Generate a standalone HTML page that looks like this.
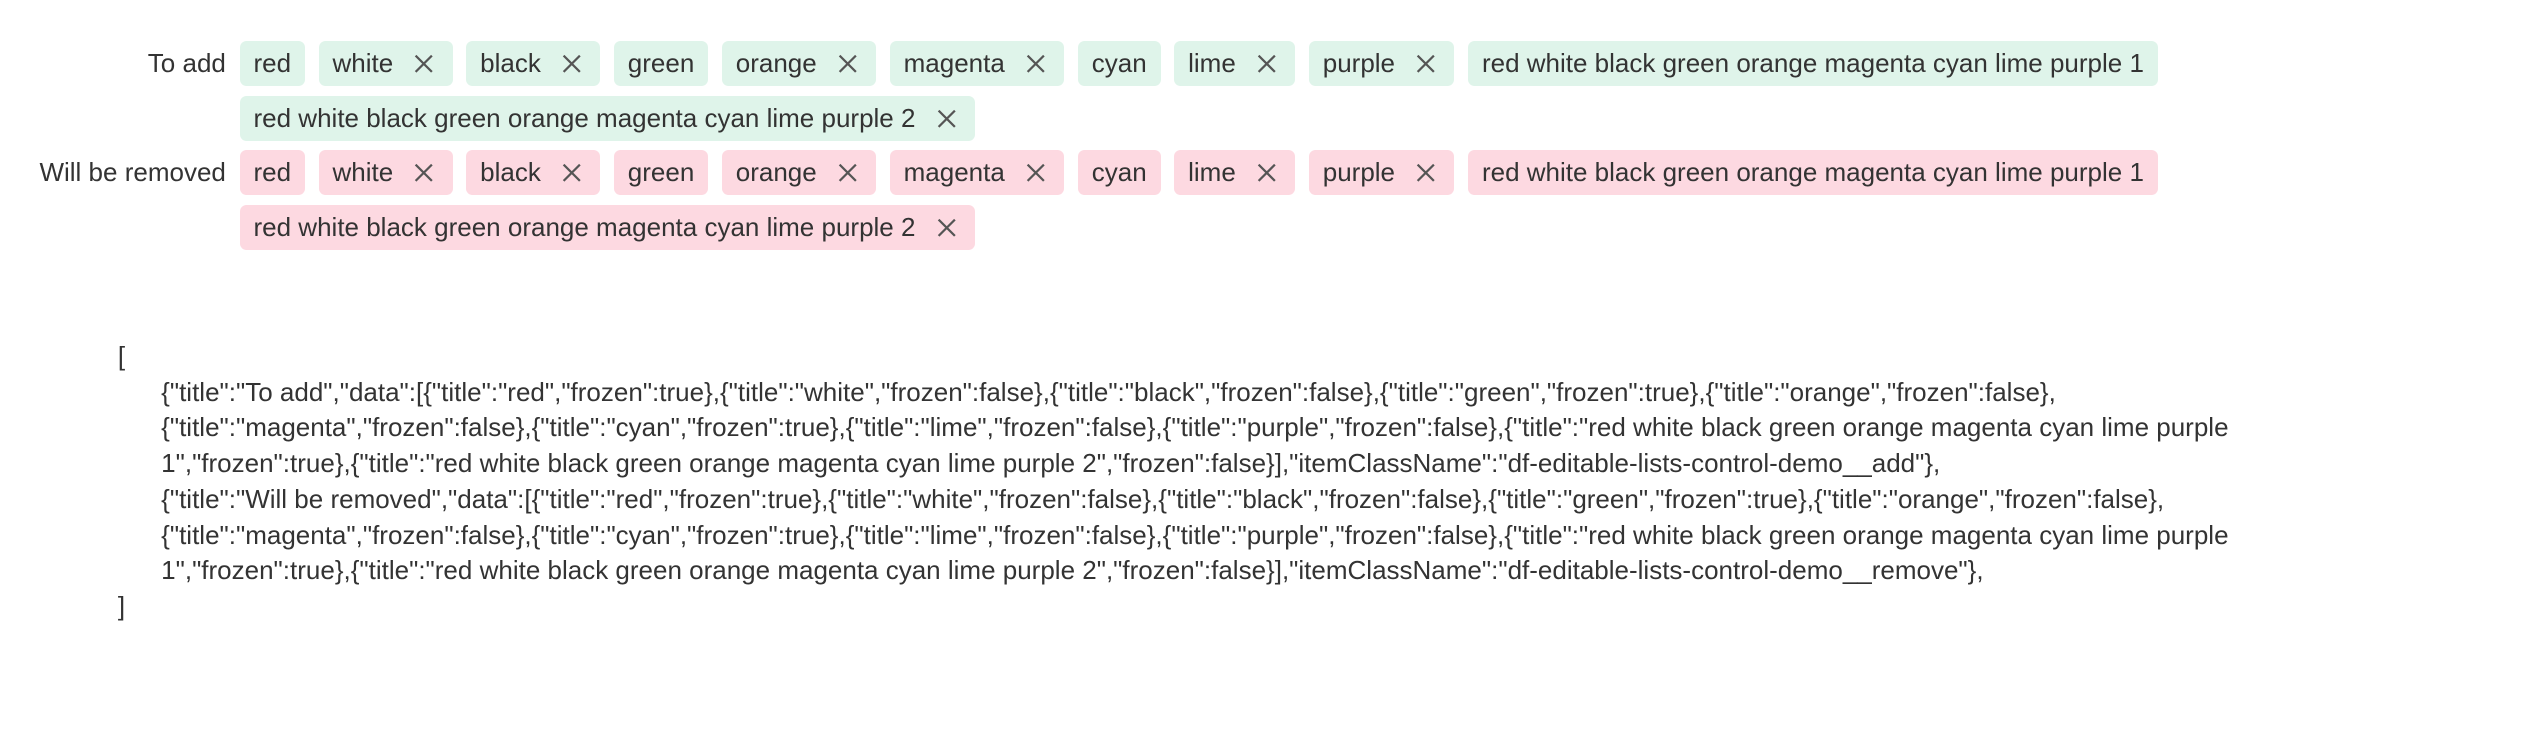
<!DOCTYPE html>
<html><head><meta charset="utf-8"><style>
html,body{margin:0;padding:0;background:#fff;width:2528px;height:748px;overflow:hidden}
#w{zoom:1.625;font-family:"Liberation Sans",Arial,sans-serif;font-size:16px;color:#333;width:1556px;position:relative}
.row{position:absolute;left:0;display:flex}
.lab{text-align:right;padding-right:8.5px;line-height:28px;box-sizing:border-box;width:147.5px}
.chips{width:1200px}
.c{display:inline-flex;align-items:center;height:28px;padding:0 8.5px;border-radius:4px;margin:0 8.5px 6px 0;vertical-align:top;white-space:nowrap}
.a .c{background:#dff4ea}
.r .c{background:#fdd9e1}
.x{width:12px;height:12px;margin-left:13px;margin-right:3px}
pre{position:absolute;left:72.5px;top:208.5px;margin:0;font-family:inherit;line-height:22px;white-space:pre}
</style></head><body><div id="w">
<div class="row a" style="top:25px"><div class="lab">To add</div><div class="chips">
<span class="c">red</span><span class="c">white<svg class="x" viewBox="0 0 12 12"><path d="M1 1L11 11M11 1L1 11" stroke="#555" stroke-width="1.4"/></svg></span><span class="c">black<svg class="x" viewBox="0 0 12 12"><path d="M1 1L11 11M11 1L1 11" stroke="#555" stroke-width="1.4"/></svg></span><span class="c">green</span><span class="c">orange<svg class="x" viewBox="0 0 12 12"><path d="M1 1L11 11M11 1L1 11" stroke="#555" stroke-width="1.4"/></svg></span><span class="c">magenta<svg class="x" viewBox="0 0 12 12"><path d="M1 1L11 11M11 1L1 11" stroke="#555" stroke-width="1.4"/></svg></span><span class="c">cyan</span><span class="c">lime<svg class="x" viewBox="0 0 12 12"><path d="M1 1L11 11M11 1L1 11" stroke="#555" stroke-width="1.4"/></svg></span><span class="c">purple<svg class="x" viewBox="0 0 12 12"><path d="M1 1L11 11M11 1L1 11" stroke="#555" stroke-width="1.4"/></svg></span><span class="c">red white black green orange magenta cyan lime purple 1</span><br><span class="c">red white black green orange magenta cyan lime purple 2<svg class="x" viewBox="0 0 12 12"><path d="M1 1L11 11M11 1L1 11" stroke="#555" stroke-width="1.4"/></svg></span>
</div></div>
<div class="row r" style="top:92px"><div class="lab">Will be removed</div><div class="chips">
<span class="c">red</span><span class="c">white<svg class="x" viewBox="0 0 12 12"><path d="M1 1L11 11M11 1L1 11" stroke="#555" stroke-width="1.4"/></svg></span><span class="c">black<svg class="x" viewBox="0 0 12 12"><path d="M1 1L11 11M11 1L1 11" stroke="#555" stroke-width="1.4"/></svg></span><span class="c">green</span><span class="c">orange<svg class="x" viewBox="0 0 12 12"><path d="M1 1L11 11M11 1L1 11" stroke="#555" stroke-width="1.4"/></svg></span><span class="c">magenta<svg class="x" viewBox="0 0 12 12"><path d="M1 1L11 11M11 1L1 11" stroke="#555" stroke-width="1.4"/></svg></span><span class="c">cyan</span><span class="c">lime<svg class="x" viewBox="0 0 12 12"><path d="M1 1L11 11M11 1L1 11" stroke="#555" stroke-width="1.4"/></svg></span><span class="c">purple<svg class="x" viewBox="0 0 12 12"><path d="M1 1L11 11M11 1L1 11" stroke="#555" stroke-width="1.4"/></svg></span><span class="c">red white black green orange magenta cyan lime purple 1</span><br><span class="c">red white black green orange magenta cyan lime purple 2<svg class="x" viewBox="0 0 12 12"><path d="M1 1L11 11M11 1L1 11" stroke="#555" stroke-width="1.4"/></svg></span>
</div></div>
<pre>[
      {"title":"To add","data":[{"title":"red","frozen":true},{"title":"white","frozen":false},{"title":"black","frozen":false},{"title":"green","frozen":true},{"title":"orange","frozen":false},
      {"title":"magenta","frozen":false},{"title":"cyan","frozen":true},{"title":"lime","frozen":false},{"title":"purple","frozen":false},{"title":"red white black green orange magenta cyan lime purple
      1","frozen":true},{"title":"red white black green orange magenta cyan lime purple 2","frozen":false}],"itemClassName":"df-editable-lists-control-demo__add"},
      {"title":"Will be removed","data":[{"title":"red","frozen":true},{"title":"white","frozen":false},{"title":"black","frozen":false},{"title":"green","frozen":true},{"title":"orange","frozen":false},
      {"title":"magenta","frozen":false},{"title":"cyan","frozen":true},{"title":"lime","frozen":false},{"title":"purple","frozen":false},{"title":"red white black green orange magenta cyan lime purple
      1","frozen":true},{"title":"red white black green orange magenta cyan lime purple 2","frozen":false}],"itemClassName":"df-editable-lists-control-demo__remove"},
]</pre>
</div></body></html>
